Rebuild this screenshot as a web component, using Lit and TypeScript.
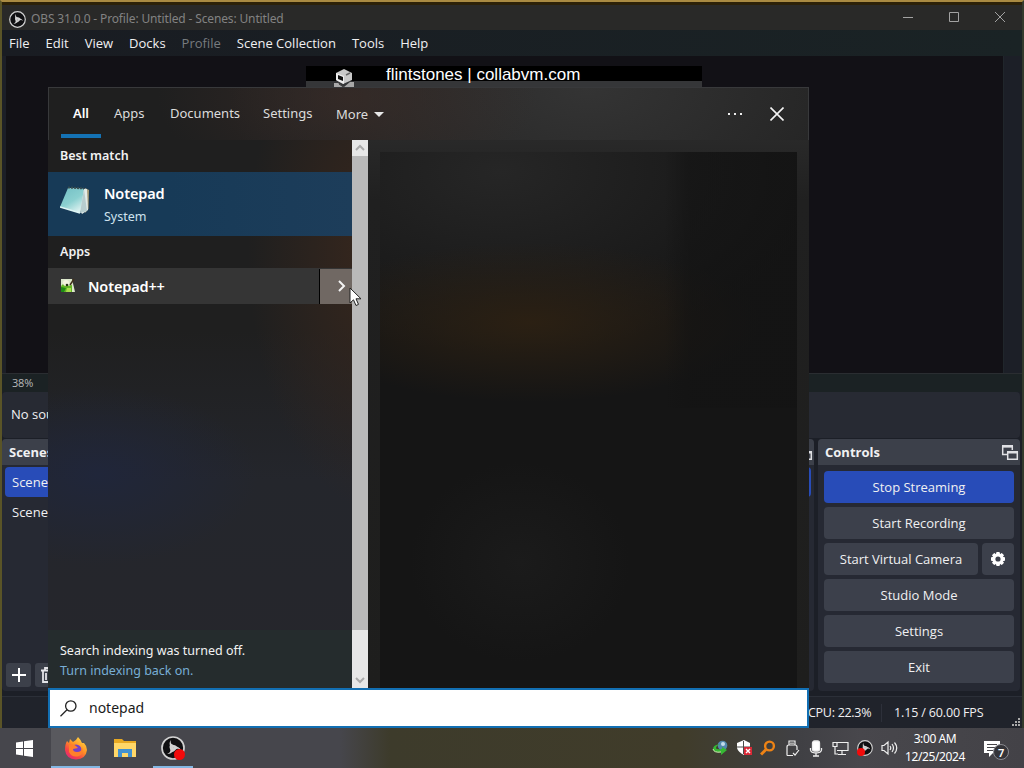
import { LitElement, html, css, svg } from "lit";
import { customElement } from "lit/decorators.js";

const obsLogo = (size: number) => html`<svg width=${size} height=${size} viewBox="0 0 24 24">
  <circle cx="12" cy="12" r="11" fill="#101012" stroke="#d2d2d2" stroke-width="1.7" />
  ${[0, 120, 240].map(
    (a) => svg`<path transform="rotate(${a} 12 12)" fill="#d2d2d2"
      d="M11.5 12.3C8.6 11 7.6 7.200 9.800 4.100C9.200 6.900 10.300 8.700 12.600 8.900C14.700 9.100 16.200 10.300 16.500 12.200C15 10.900 13.200 10.900 11.500 12.300Z" />`
  )}
</svg>`;

const popOut = html`<svg width="18" height="17" viewBox="0 0 18 17" fill="none" stroke="#dfe0e4">
  <path d="M6 10.500H1.700V2.500H11.300V6" stroke-width="1.500" />
  <path d="M1 2.300H12" stroke-width="2.600" />
  <path d="M6.700 8H16.300V15.300H6.700Z" stroke-width="1.500" />
  <path d="M6 8.200H17" stroke-width="2.600" />
</svg>`;

const gear = html`<svg width="16" height="16" viewBox="0 0 16 16">
  <g fill="#fff">
    ${[0, 45, 90, 135].map((a) => svg`<rect x="6.100" y="1" width="3.800" height="14" rx="1" transform="rotate(${a} 8 8)" />`)}
    <circle cx="8" cy="8" r="5.600" />
  </g>
  <circle cx="8" cy="8" r="2.600" fill="#3c404b" />
</svg>`;

@customElement("obs-window")
class ObsWindow extends LitElement {
  static styles = css`
    :host { display: flex; flex-direction: column; height: 728px; box-sizing: border-box;
      border-left: 2px solid #5a5427; border-top: 2px solid #a98a42; border-right: 2px solid #333a2c;
      background: #1c1f27; color: #f0f0f2; font: 13px/18px "Open Sans", "Noto Sans", sans-serif;
      white-space: nowrap; overflow: hidden; }
    .title { display: flex; align-items: center; height: 28px; padding: 3px 0 0 7px; box-sizing: border-box;
      background: #292928; border-top: 3px solid #2c2108; color: #828282; flex: none; font-family: "Noto Sans", sans-serif; font-size: 12px; }
    .title .name { margin-left: 5px; letter-spacing: -0.14px; flex: 1; }
    .caption { display: flex; gap: 35px; padding-right: 16px; margin-top: -4px; }
    .menu { display: flex; align-items: center; gap: 16px; height: 26px; padding-left: 7px; background: linear-gradient(90deg, #191c22, #1a2325); flex: none; }
    .menu .off { color: #777b7f; }
    .canvas { display: flex; height: 317px; flex: none; margin-left: 4px; background: #121116; border-right: 1px solid #20262b; margin-right: 18px; }
    .banner { position: relative; width: 396px; height: 22px; margin: 10px 0 0 300px; background: linear-gradient(#000 15px, #353638 15px); }
    .banner .addr { position: absolute; left: 80px; top: -1px; font: 17px/20px "Liberation Sans", sans-serif; color: #fff; }
    .banner svg { position: absolute; left: 26px; top: 3px; }
    .zoom { height: 19px; flex: none; padding-left: 10px; font-size: 11px; line-height: 17px; color: #b7b9bb; background: #1b2224; border-top: 1px solid #2a2d31; box-sizing: border-box; letter-spacing: -0.2px; }
    .source { height: 46px; flex: none; box-sizing: border-box; padding-left: 9px; line-height: 44px; background: #272a33; border-radius: 4px; margin: 0 2px 0 0; }
    .docks { display: grid; grid-template-columns: 812px 202px; gap: 4px; height: 252px; margin-top: 1px; flex: none; }
    .dock { background: #262933; border-radius: 4px; overflow: hidden; display: flex; flex-direction: column; }
    .head { display: flex; align-items: center; justify-content: space-between; height: 26px; background: #3c404a; padding: 0 1px 0 7px; font-weight: 700; font-size: 13px; box-sizing: border-box; flex: none; }
    .scene { height: 30px; line-height: 30px; padding-left: 7px; margin: 0 3px; border-radius: 4px; }
    .scene.on { background: #284cb8; margin-top: 2px; }
    .tools { display: flex; gap: 4px; margin-top: auto; padding: 0 0 4px 4px; }
    .tool { width: 25px; height: 24px; background: #3c404a; border-radius: 3px; display: grid; place-items: center; }
    .buttons { display: flex; flex-direction: column; gap: 4px; padding: 6px 6px 0; }
    .row { display: flex; gap: 4px; }
    .btn { height: 32px; line-height: 32px; border-radius: 4px; background: #3c404b; text-align: center; flex: 1; }
    .col .btn { flex: none; }
    .btn.primary { background: #284cb8; }
    .btn.cog { flex: 0 0 32px; display: grid; place-items: center; }
    .status { display: flex; align-items: center; flex: 1; margin-top: 5px; border-top: 1px solid #2b2f38; background: #20232b; padding-left: 806px; font-size: 12.500px; }
    .cpu { width: 73px; border-right: 1px solid #2d303a; letter-spacing: -0.28px; }
    .fps { padding-left: 12px; flex: 1; letter-spacing: -0.15px; }
    .grip { align-self: flex-end; margin: 0 1px 1px 0; }
  `;

  render() {
    return html`
      <div class="title">
        ${obsLogo(17)}
        <span class="name">OBS 31.0.0 - Profile: Untitled - Scenes: Untitled</span>
        <div class="caption">
          ${["M0 6.500H10", "M0.500 1.500H9.500V10.500H0.500Z", "M0 1L10 11M10 1L0 11"].map(
            (d) => html`<svg width="11" height="12" fill="none" stroke="#a2a2a2" stroke-width="1"><path d=${d} /></svg>`
          )}
        </div>
      </div>
      <div class="menu">
        ${["File", "Edit", "View", "Docks", "Profile", "Scene Collection", "Tools", "Help"].map(
          (m) => html`<span class=${m === "Profile" ? "off" : ""}>${m}</span>`
        )}
      </div>
      <div class="canvas">
        <div class="banner">
          <svg width="24" height="20" viewBox="0 0 24 20">
            <path d="M4 4L12 0L20 4V11L11 15L4 11Z" fill="#c9c9c9" />
            <path d="M4 4L12 7V15L4 11Z" fill="#eee" /><path d="M6 6L11 8V12L6 10Z" fill="#111" />
            <path d="M14 6L18 4" stroke="#666" stroke-width="1.500" />
            <path d="M2 14H6L12 18L18 13H22V19H2Z" fill="#a8a8a8" /><path d="M7 15L13 19" stroke="#333" />
          </svg>
          <span class="addr">flintstones | collabvm.com</span>
        </div>
      </div>
      <div class="zoom">38%</div>
      <div class="source">No source selected</div>
      <div class="docks">
        <div class="dock">
          <div class="head"><span>Scenes</span>${popOut}</div>
          <div class="scene on">Scene</div>
          <div class="scene">Scene 2</div>
          <div class="tools">
            <div class="tool"><svg width="14" height="14" stroke="#fff" stroke-width="2"><path d="M7 0V14M0 7H14" /></svg></div>
            <div class="tool"><svg width="15" height="17" fill="none" stroke="#e4e4e8" stroke-width="1.800"><path d="M1 3.500H14M5 3V1H10V3M3 4V15H12V4M6 6V13M9 6V13" /></svg></div>
          </div>
        </div>
        <div class="dock">
          <div class="head"><span>Controls</span>${popOut}</div>
          <div class="buttons">
            <div class="row"><div class="btn primary">Stop Streaming</div></div>
            <div class="row"><div class="btn">Start Recording</div></div>
            <div class="row"><div class="btn">Start Virtual Camera</div><div class="btn cog">${gear}</div></div>
            ${["Studio Mode", "Settings", "Exit"].map((b) => html`<div class="row"><div class="btn">${b}</div></div>`)}
          </div>
        </div>
      </div>
      <div class="status">
        <span class="cpu">CPU: 22.3%</span><span class="fps">1.15 / 60.00 FPS</span>
        <svg class="grip" width="9" height="9" fill="#aaa"><path d="M6 0h2v2h-2zM3 3h2v2h-2zM6 3h2v2h-2zM0 6h2v2h-2zM3 6h2v2h-2zM6 6h2v2h-2z" /></svg>
      </div>
    `;
  }
}

@customElement("search-panel")
class SearchPanel extends LitElement {
  static styles = css`
    :host { display: flex; flex-direction: column; width: 761px; height: 641px; box-sizing: border-box; color: #f2f2f2;
      font: 13px/18px "Noto Sans", sans-serif; white-space: nowrap;
      background: radial-gradient(190px 100px at 300px 10px, #3b2c27aa, transparent),
        radial-gradient(360px 200px at 540px 0, #343434, transparent), #1f1f1f; }
    .tabs { display: flex; height: 53px; padding-left: 13px; box-sizing: border-box; border: 1px solid #38393b; border-bottom: 0; flex: none; line-height: 51px; padding-left: 12px; color: #dcdcdc; }
    .tab { position: relative; margin-right: 13px; width: 40px; text-align: center; }
    .tab.on { font-weight: 600; color: #fff; box-shadow: inset 0 -4px #1472b4; height: 50px; }
    .tab.apps { width: 30px; margin-right: 26px; }
    .tab.docs { width: 67px; margin-right: 26px; }
    .tab.sets { width: 47px; margin-right: 26px; }
    .tab.more { display: flex; align-items: center; gap: 6px; flex: 1; text-align: left; }
    .acts { display: flex; align-items: center; gap: 27px; margin-right: 24px; }
    .main { display: grid; grid-template-columns: 304px 16px 1fr; height: 548px; flex: none; }
    .list { display: flex; flex-direction: column; overflow: hidden;
      background: radial-gradient(160px 90px at 50px 335px, #20263a, transparent), radial-gradient(130px 260px at 330px 110px, #38271d, transparent), linear-gradient(#1f1f1f 190px, #24262c 340px, #26262c); }
    h3 { margin: 0; font-size: 12.500px; font-weight: 600; line-height: 32px; padding-left: 12px; }
    .best { display: flex; height: 64px; box-sizing: border-box; padding: 12px 0 0 12px; gap: 14px; background: linear-gradient(90deg, #173a57 40%, #1d3d5a); }
    .best b { display: block; font-size: 14.500px; font-weight: 600; line-height: 18px; color: #fff; }
    .best span { display: block; font-size: 12.500px; color: #cfe2ee; margin-top: 6px; }
    .app { display: flex; height: 36px; background: #353535; align-items: center; font-size: 14.500px; font-weight: 600; padding-left: 12px; }
    .app b { font-weight: 600; margin-left: 12px; flex: 1; color: #fff; }
    .go { width: 33px; height: 35px; background: #706863; border-left: 1px solid #000; display: grid; place-items: center; padding-left: 12px; box-sizing: border-box; }
    .note { margin-top: auto; height: 58px; padding: 11px 12px 0; box-sizing: border-box; background: #252c2d; line-height: 20px; font-size: 12.500px; }
    .link { color: #78aed6; }
    .bar { display: flex; flex-direction: column; background: #e7e7e7; }
    .thumb { height: 474px; background: #b9b9b9; }
    .arrow { height: 16px; display: grid; place-items: center; }
    .arrow.end { margin-top: auto; }
    .view { padding: 12px 12px 0; background: linear-gradient(#292929, #202020 60px, #1e1e1d); }
    .pane { height: 100%; background: linear-gradient(90deg, transparent 285px, #13131399 310px) 0 0 / 100% 256px no-repeat,
        radial-gradient(230px 80px at 150px 170px, #2b2013, transparent), radial-gradient(320px 180px at 120px 20px, #262626, transparent),
        radial-gradient(110px 100px at 140px 410px, #1b1b1b, transparent), #151515; }
    .box { display: flex; align-items: center; flex: 1; border: 2px solid #126fb3; background: #fff; color: #1a1a1a; font-size: 14px; padding-left: 10px; }
    .box span { margin-left: 12px; }
    .best b, .app b { letter-spacing: -0.15px; }
  `;

  chevron(d: string, stroke = "#aaa") {
    return html`<svg width="10" height="14" fill="none" stroke=${stroke} stroke-width="2"><path d=${d} /></svg>`;
  }

  render() {
    return html`
      <div class="tabs">
        <span class="tab on">All</span><span class="tab apps">Apps</span><span class="tab docs">Documents</span>
        <span class="tab sets">Settings</span>
        <span class="tab more">More <svg width="10" height="5" fill="#e8e8e8"><path d="M0 0H10L5 5Z" /></svg></span>
        <div class="acts">
          <svg width="16" height="4" fill="#eee"><path d="M1 1h2v2h-2zM7 1h2v2h-2zM13 1h2v2h-2z" /></svg>
          <svg width="14" height="14" stroke="#f4f4f4" stroke-width="1.600"><path d="M0.500 0.500L13.500 13.500M13.500 0.500L0.500 13.500" /></svg>
        </div>
      </div>
      <div class="main">
        <div class="list">
          <h3>Best match</h3>
          <div class="best">
            <svg width="30" height="32" viewBox="0 0 30 32">
              <defs><linearGradient id="page" x2="0.600" y2="1"><stop stop-color="#72bec4" /><stop offset="0.600" stop-color="#8bd0d0" /><stop offset="1" stop-color="#d7efee" /></linearGradient></defs>
              <path d="M25 4L29 6L28.500 25L25 29Z" fill="#a89c77" />
              <path d="M8 4L27 5L28 26L22 30Z" fill="#e2ebe8" />
              <path d="M8 4L24 5L20 29L0 23Z" fill="url(#page)" />
              <path d="M24 5L20 29L27 27Z" fill="#b7cdce" />
              <path d="M8 3.500L24 4.500" stroke="#374e52" stroke-width="2" stroke-dasharray="2 1" />
              <path d="M0 23L20 29" stroke="#dff5f4" stroke-width="1.500" />
            </svg>
            <div><b>Notepad</b><span>System</span></div>
          </div>
          <h3>Apps</h3>
          <div class="app">
            <svg width="16" height="16" viewBox="0 0 16 16">
              <path d="M1 1H12L15 14H1Z" fill="#dce8cb" /><path d="M1 8L4 5L7 8L12 7V14H2Z" fill="#64b724" />
              <circle cx="6" cy="5" r="3" fill="#f4f4df" /><circle cx="7" cy="7" r="1.300" fill="#273318" />
              <path d="M1 9L6 10L4 14H1Z" fill="#1e8b16" /><path d="M10 7L14 1" stroke="#40301a" stroke-width="1.500" /><path d="M7 10H11V14H6Z" fill="#a8df4e" />
            </svg>
            <b>Notepad++</b>
            <div class="go">${this.chevron("M2 2L7 7L2 12", "#f4f4f4")}</div>
          </div>
          <div class="note">Search indexing was turned off.<div class="link">Turn indexing back on.</div></div>
        </div>
        <div class="bar">
          <div class="arrow">${this.chevron("M1 9L5 5L9 9")}</div>
          <div class="thumb"></div>
          <div class="arrow end">${this.chevron("M1 5L5 9L9 5")}</div>
        </div>
        <div class="view"><div class="pane"></div></div>
      </div>
      <div class="box">
        <svg width="17" height="17" viewBox="0 0 17 17" fill="none" stroke="#222" stroke-width="1.300"><circle cx="10.800" cy="6" r="5.200" /><path d="M7 9.800L0.500 16.300" /></svg>
        <span>notepad</span>
      </div>
    `;
  }
}

@customElement("task-bar")
class TaskBar extends LitElement {
  static styles = css`
    :host { display: flex; height: 40px; color: #fff; font: 12px/18px "Noto Sans", sans-serif; white-space: nowrap; letter-spacing: -0.400px;
      background: linear-gradient(90deg, #46464c 0, #46464c 340px, #3d3b2b 390px, #403c2a 680px, #404044 800px, #48474c 860px, #434247); }
    .app { width: 49px; display: grid; place-items: center; box-sizing: border-box; }
    .start { width: 51px; padding-right: 3px; }
    .on { background: #59595e; box-shadow: inset 0 -2px #83b7e3; }
    .app.obs { width: 40px; margin-left: 4px; box-shadow: inset 0 -2px #83b7e3; }
    .tray { display: flex; gap: 8px; align-items: center; margin-left: auto; }
    .clock { width: 74px; text-align: center; margin-top: 2px; }
    .notes { position: relative; width: 52px; display: grid; place-items: center; }
    .notes svg { margin-right: 13px; }
    .count { position: absolute; left: 21px; top: 16px; width: 16px; height: 16px; line-height: 15px; text-align: center; border-radius: 50%; background: #343439; border: 1px solid #8a8a90; box-sizing: border-box; font-size: 11px; font-weight: 600; }
    .live { position: relative; display: grid; }
    .dot { position: absolute; right: 0; bottom: 0; border-radius: 50%; background: #f20b0b; width: 11px; height: 11px; }
    .live.small .dot { left: 0; width: 8px; height: 8px; }
  `;

  render() {
    return html`
      <div class="app start"><svg width="17" height="17" fill="#fff"><path d="M0 2.500L7 1.500V8H0ZM8 1.300L17 0V8H8ZM0 9H7V15.500L0 14.500ZM8 9H17V17L8 15.700Z" /></svg></div>
      <div class="app on">
        <svg width="24" height="24" viewBox="0 0 24 24">
          <defs><linearGradient id="fox" x1="0.900" y1="0" x2="0.200" y2="1"><stop stop-color="#ffe24a" /><stop offset="0.450" stop-color="#ff9424" /><stop offset="0.750" stop-color="#f64345" /><stop offset="1" stop-color="#e4267c" /></linearGradient></defs>
          <path d="M3 5L5 7L6 3L9 6Q12 5 14 1Q17 4 18 7L20 7Q23 10 23 14Q22 23 12 23.500Q2 23 1 14Q1 8 3 5Z" fill="url(#fox)" />
          <circle cx="12" cy="14" r="5.500" fill="#7440c8" />
          <path d="M5 9Q9 7 12 10L14 12L9 13Q9 16 13 16Q18 16 18 11Q20 18 15 20Q8 22 5 16Z" fill="#ff802b" />
        </svg>
      </div>
      <div class="app">
        <svg width="22" height="20" viewBox="0 0 22 20"><path d="M0 1H8L10 3H22V19H0Z" fill="#e8a922" /><path d="M0 5H22V19H0Z" fill="#ffd768" /><path d="M4 19V11H18V19H14V15H8V19Z" fill="#4291cf" /></svg>
      </div>
      <div class="app obs"><div class="live">${obsLogo(24)}<span class="dot"></span></div></div>
      <div class="tray">
        <svg width="16" height="16" viewBox="0 0 16 16"><circle cx="10.500" cy="5.500" r="4.800" fill="#5288ac" /><circle cx="11" cy="4" r="2" fill="#c3dcec" /><path d="M8 4Q1 5 1 9Q2 13 9 12V15L15 10L10 7V9Q4 10 4 8Q4 6 8 4Z" fill="#36b833" /><path d="M1 9Q2 13 9 12" stroke="#d7e7b5" fill="none" /></svg>
        <svg width="16" height="16" viewBox="0 0 16 16"><path d="M8 0L14 3V8Q13 13 8 15Q2 12 1 8V3Z" fill="#fff" /><path d="M7.500 1V14M1 7H14" stroke="#4b4b4b" /><path d="M8 7H16V15H8Z" fill="#d92936" /><path d="M10 9L14 13M14 9L10 13" stroke="#fff" stroke-width="1.400" /></svg>
        <svg width="16" height="16" viewBox="0 0 16 16" fill="none" stroke="#ee8315"><circle cx="9.500" cy="6" r="4.400" stroke-width="2.400" /><path d="M6 9.500L1 14.500" stroke-width="3" /></svg>
        <svg width="16" height="17" viewBox="0 0 16 17" fill="none" stroke="#eee" stroke-width="1.200"><path d="M5 5V1H11V5M3 15.500V7Q3 5 5 5H11Q13 5 13 7V10M3 15.500H9M7 2.500V4M9 2.500V4M9 13L11 15L15 10" /></svg>
        <svg width="16" height="17" viewBox="0 0 16 17" fill="none" stroke="#eee" stroke-width="1.300"><rect x="4.500" y="1" width="7" height="10" rx="2" fill="#fff" /><path d="M2.500 8V10Q3 13 8 13Q13 13 13.500 10V8M8 13V16M5 16H11" /></svg>
        <svg width="17" height="16" viewBox="0 0 17 16" fill="none" stroke="#eee" stroke-width="1.200"><path d="M4 2.500H16V10.500H5M10 11V14M6 14.500H14M1 2.500H5V6.500H1ZM3 7V14H6" /></svg>
        <div class="live small">${obsLogo(16)}<span class="dot"></span></div>
        <svg width="17" height="16" viewBox="0 0 17 16" fill="none" stroke="#eee" stroke-width="1.200"><path d="M1 5.500H3L7 2V14L3 10.500H1ZM9 6Q10.500 8 9 10M11 4Q14 8 11 12M13.500 2.500Q18 8 13.500 13.500" /></svg>
      </div>
      <div class="clock">3:00 AM<br />12/25/2024</div>
      <div class="notes">
        <svg width="18" height="17" viewBox="0 0 18 17"><path d="M1 1H17V13H10L6 17V13H1Z" fill="#fff" /><path d="M4 4.500H14M4 7.500H14M4 10.500H10" stroke="#47464b" stroke-width="1.200" /></svg>
        <span class="count">7</span>
      </div>
    `;
  }
}

@customElement("app-root")
class AppRoot extends LitElement {
  static styles = css`
    :host { display: block; position: relative; width: 1024px; height: 768px; overflow: hidden; background: #1c1f27; }
    search-panel { position: absolute; left: 48px; top: 87px; }
    .cursor { position: absolute; left: 349px; top: 287px; }
  `;

  render() {
    return html`
      <obs-window></obs-window>
      <task-bar></task-bar>
      <search-panel></search-panel>
      <svg class="cursor" width="14" height="21" viewBox="0 0 14 21"><path d="M1 1V16L4.500 12.800L7 18.500L9.500 17.400L7 11.800H12Z" fill="#fff" stroke="#222" stroke-width="1" /></svg>
    `;
  }
}
